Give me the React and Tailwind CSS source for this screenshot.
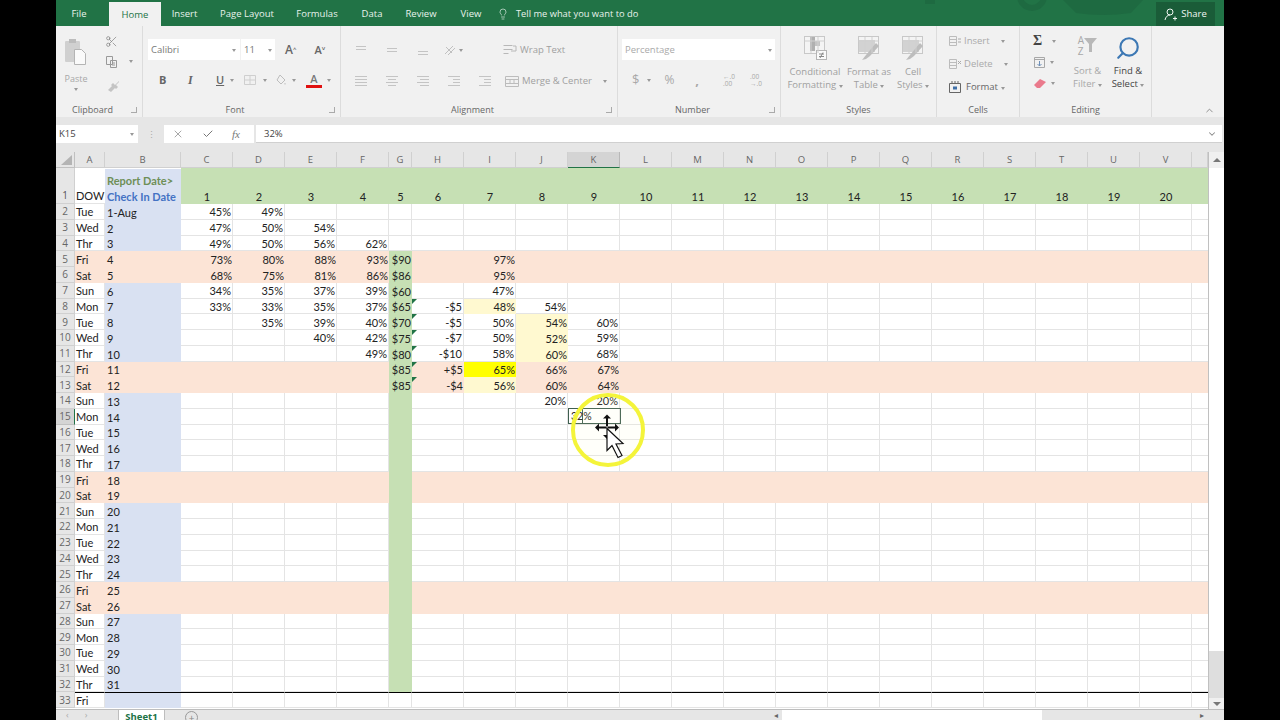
import React from "react";
import { Scissors, Lightbulb, Search, ChevronUp, ChevronDown, X, Check } from "lucide-react";

const ui = "font-['Open_Sans',sans-serif]";
const cols = ["A", "B", "C", "D", "E", "F", "G", "H", "I", "J", "K", "L", "M", "N", "O", "P", "Q", "R", "S", "T", "U", "V", ""];
const days = ["Tue", "Wed", "Thr", "Fri", "Sat", "Sun", "Mon"];

// values keyed by sheet row
const data = {
  2: { C: "45%", D: "49%" },
  3: { C: "47%", D: "50%", E: "54%" },
  4: { C: "49%", D: "50%", E: "56%", F: "62%" },
  5: { C: "73%", D: "80%", E: "88%", F: "93%", G: "$90", I: "97%" },
  6: { C: "68%", D: "75%", E: "81%", F: "86%", G: "$86", I: "95%" },
  7: { C: "34%", D: "35%", E: "37%", F: "39%", G: "$60", I: "47%" },
  8: { C: "33%", D: "33%", E: "35%", F: "37%", G: "$65", H: "-$5", I: "48%", J: "54%" },
  9: { D: "35%", E: "39%", F: "40%", G: "$70", H: "-$5", I: "50%", J: "54%", K: "60%" },
  10: { E: "40%", F: "42%", G: "$75", H: "-$7", I: "50%", J: "52%", K: "59%" },
  11: { F: "49%", G: "$80", H: "-$10", I: "58%", J: "60%", K: "68%" },
  12: { G: "$85", H: "+$5", I: "65%", J: "66%", K: "67%" },
  13: { G: "$85", H: "-$4", I: "56%", J: "60%", K: "64%" },
  14: { J: "20%", K: "20%" },
};
const paleCells = ["8I", "9J", "10J", "11J", "13I"];
const flagged = [8, 9, 10, 11, 12, 13];

const Tab = ({ w, children, active }) => (
  <div className={`flex h-full items-center justify-center pt-[2px] ${w} ${active ? "bg-[#f1f1f1] text-[#217346]" : "text-[#e8f2ec]"}`}>
    {children}
  </div>
);

const Group = ({ w, label, launcher, children }) => (
  <div className={`flex h-full flex-col border-r border-[#dcdcdc] ${w}`}>
    <div className="min-h-0 flex-1">{children}</div>
    <div className={`relative flex h-[14px] items-center justify-center text-[9px] text-[#666] ${launcher ? "pr-[13px]" : ""}`}>
      {label}
      {launcher && <span className="absolute right-[5px] top-[4px] h-[6px] w-[6px] border-b border-r border-[#aaa]" />}
    </div>
  </div>
);

const Caret = ({ className = "" }) => (
  <span className={`inline-block h-0 w-0 border-x-[2.5px] border-t-[3px] border-x-transparent border-t-[#999] ${className}`} />
);

const Lines = ({ rows, className = "" }) => (
  <svg width="14" height="12" viewBox="0 0 14 12" className={className} stroke="#c4c4c4" fill="none">
    {rows.map((r, i) => (
      <path key={i} d={`M${r[0]} ${r[2]}.5H${r[1]}`} />
    ))}
  </svg>
);

const PasteIcon = () => (
  <svg width="24" height="28" viewBox="0 0 24 28">
    <rect x="1" y="3" width="15" height="21" rx="1" fill="#d0d0d0" />
    <rect x="5" y="1" width="7" height="4" fill="#bcbcbc" />
    <path d="M10.5 11.5h7l4 4v11h-11z" fill="#fafafa" stroke="#b4b4b4" />
  </svg>
);

const GridIcon = ({ brush, cond }) => (
  <svg width="24" height="26" viewBox="0 0 24 26">
    <rect x="1.5" y="1.5" width="20" height="17" fill="#f4f4f4" stroke="#c8c8c8" />
    {cond ? (
      <>
        <rect x="7" y="2" width="5" height="14" fill="#b0b0b0" />
        <rect x="12" y="6" width="5" height="5" fill="#c4c4c4" />
        <rect x="13.5" y="15.5" width="10" height="9" fill="#fafafa" stroke="#b4b4b4" />
        <path d="M16 19h5M16 21.5h5M20 17.5l-3 5.5" stroke="#888" fill="none" />
      </>
    ) : (
      <rect x="2" y="5" width="16" height="12" fill="#d2d2d2" />
    )}
    {brush && <path d="M22 11l-9 10-4 3-4 1 4-5 10-12z" fill="#bdbdbd" />}
    <path d="M1.5 6h20M8 2v16M15 2v16" stroke="#d0d0d0" fill="none" />
  </svg>
);

const SmallCell = ({ d = "" }) => (
  <svg width="14" height="12" viewBox="0 0 14 12" fill="none" stroke="#bcbcbc">
    <path d="M1.5 1.5h7v9h-7zM1.5 4.5h7M1.5 7.5h7" />
    <path d={d} stroke="#aaa" />
  </svg>
);

const Ribbon = () => (
  <div className={`flex h-[91px] bg-[#f1f1f1] ${ui}`}>
    <Group w="w-[87px]" label="Clipboard" launcher>
      <div className="flex h-full">
        <div className="flex w-[40px] flex-col items-center pt-[12px] text-[9px] text-[#a8a8a8]">
          <PasteIcon />
          <span className="mt-[7px] leading-[12px]">Paste</span>
          <Caret className="mt-[3px]" />
        </div>
        <div className="flex flex-col gap-[7px] pl-[9px] pt-[9px]">
          <Scissors size={13} strokeWidth={1.2} className="text-[#777]" />
          <div className="flex items-center gap-[11px]">
            <svg width="13" height="13" viewBox="0 0 13 13" fill="none" stroke="#999">
              <path d="M1.5 1.5h6v8h-6zM5.5 5.5h6v7h-6zM7 8h3M7 10h3" />
            </svg>
            <Caret />
          </div>
          <svg width="13" height="13" viewBox="0 0 13 13" className="ml-[2px] mt-[5px]">
            <path d="M12 1L8 5 6 3 4 5l1 1-4 4 3 2 4-4 1 1 2-2-2-2 3-3z" fill="#c4c4c4" />
          </svg>
        </div>
      </div>
    </Group>

    <Group w="w-[198px]" label="Font" launcher>
      <div className="pl-[5px] pt-[13px]">
        <div className="flex h-[21px] items-center">
          <div className="flex h-full w-[92px] items-center justify-between bg-white px-[3px] pt-px text-[9.5px] text-[#777]">
            Calibri <Caret className="mr-[1px]" />
          </div>
          <div className="ml-px flex h-full w-[34px] items-center justify-between bg-white px-[3px] pt-px text-[9.5px] text-[#777]">
            11 <Caret />
          </div>
          <span className="ml-[10px] text-[12px] font-semibold leading-none text-[#666]">A<sup className="text-[6px]">^</sup></span>
          <span className="ml-[18px] text-[11px] font-semibold leading-none text-[#666]">A<sup className="text-[6px]">˅</sup></span>
        </div>
        <div className="mt-[10px] flex h-[20px] items-center pl-[11px] text-[#666]">
          <span className="w-[29px] text-[11px] font-bold">B</span>
          <span className="w-[28px] font-['Liberation_Serif',serif] text-[12px] font-bold italic">I</span>
          <span className="w-[14px] text-[11px] font-semibold underline">U</span>
          <Caret />
          <svg width="14" height="12" viewBox="0 0 14 12" className="ml-[9px]" fill="none" stroke="#cfcfcf">
            <path d="M1.5 1.5h11v9h-11zM7 1.5v9M1.5 6h11" />
          </svg>
          <Caret className="ml-[6px]" />
          <svg width="12" height="12" viewBox="0 0 12 12" className="ml-[8px]" fill="none" stroke="#bdbdbd">
            <path d="M5 1l5 5-4 4-4-4zM10 9v1.5" />
          </svg>
          <Caret className="ml-[5px]" />
          <div className="ml-[10px] flex w-[16px] flex-col items-center">
            <span className="text-[11px] font-semibold leading-[11px] text-[#777]">A</span>
            <span className="mt-px h-[3px] w-full bg-[#e01010]" />
          </div>
          <Caret className="ml-[5px]" />
        </div>
      </div>
    </Group>

    <Group w="w-[277px]" label="Alignment" launcher>
      <div className="pl-[13px] pt-[15px]">
        <div className="flex h-[18px] items-center text-[9.5px] text-[#a0a0a0]">
          <Lines rows={[[2, 12, 2], [2, 12, 5]]} />
          <Lines className="ml-[17px]" rows={[[2, 12, 4], [2, 12, 7]]} />
          <Lines className="ml-[17px]" rows={[[2, 12, 7], [2, 12, 10]]} />
          <svg width="14" height="12" viewBox="0 0 14 12" className="ml-[13px]" fill="none" stroke="#c0c0c0">
            <path d="M2 10L10 2M5 11l7-7M3 3l6 6" />
          </svg>
          <Caret className="ml-[2px]" />
          <svg width="16" height="14" viewBox="0 0 16 14" className="ml-[39px]" fill="none" stroke="#b8b8b8">
            <path d="M1.5 2.5h9M1.5 6.5h9M1.5 10.5h5M11 3h3v5H9" />
          </svg>
          <span className="ml-[2px]">Wrap Text</span>
        </div>
        <div className="mt-[13px] flex h-[18px] items-center text-[9.5px] text-[#a0a0a0]">
          <Lines rows={[[1, 13, 1], [1, 13, 4], [1, 13, 7], [1, 13, 10]]} />
          <Lines className="ml-[17px]" rows={[[1, 13, 1], [3, 11, 4], [1, 13, 7], [3, 11, 10]]} />
          <Lines className="ml-[17px]" rows={[[1, 13, 1], [4, 13, 4], [1, 13, 7], [4, 13, 10]]} />
          <Lines className="ml-[17px]" rows={[[1, 13, 1], [6, 13, 4], [6, 13, 7], [1, 13, 10]]} />
          <Lines className="ml-[17px]" rows={[[1, 13, 1], [6, 13, 4], [6, 13, 7], [1, 13, 10]]} />
          <svg width="16" height="13" viewBox="0 0 16 13" className="ml-[12px]" fill="none" stroke="#bcbcbc">
            <path d="M1.5 1.5h13v10h-13zM1.5 4.5h13M1.5 8.5h13M6 4.5v4M10 4.5v4" />
          </svg>
          <span className="ml-[2px]">Merge &amp; Center</span>
          <Caret className="ml-[11px]" />
        </div>
      </div>
    </Group>

    <Group w="w-[163px]" label="Number" launcher>
      <div className="pl-[4px] pt-[13px]">
        <div className="flex h-[21px] w-[153px] items-center justify-between bg-white px-[3px] pt-px text-[9.5px] text-[#aaa]">
          Percentage <Caret />
        </div>
        <div className="mt-[10px] flex h-[20px] items-center pl-[10px] text-[#a8a8a8]">
          <span className="text-[13px]">$</span>
          <Caret className="ml-[8px]" />
          <span className="ml-[13px] text-[12px]">%</span>
          <span className="ml-[21px] text-[13px] font-bold leading-[10px]">,</span>
          <span className="ml-[24px] text-[6.5px] leading-[7px]">←.0<br />.00</span>
          <span className="ml-[15px] text-[6.5px] leading-[7px]">.00<br />→.0</span>
        </div>
      </div>
    </Group>

    <Group w="w-[156px]" label="Styles">
      <div className="flex pt-[9px] text-[9.5px] leading-[13px] text-[#a0a0a0]">
        <div className="flex w-[68px] flex-col items-center">
          <GridIcon cond />
          <span className="mt-[4px] text-center">Conditional<br />Formatting <Caret /></span>
        </div>
        <div className="flex w-[40px] flex-col items-center">
          <GridIcon brush />
          <span className="mt-[4px] whitespace-nowrap text-center">Format as<br />Table <Caret /></span>
        </div>
        <div className="ml-[2px] flex w-[44px] flex-col items-center">
          <GridIcon brush />
          <span className="mt-[4px] text-center">Cell<br />Styles <Caret /></span>
        </div>
      </div>
    </Group>

    <Group w="w-[83px]" label="Cells">
      <div className="flex flex-col gap-[7px] pl-[11px] pt-[7px] text-[9.5px] leading-[16px] text-[#aaa]">
        <div className="flex items-center gap-[2px]"><SmallCell d="M10 4h3M10 7h3" />Insert<Caret className="ml-[9px]" /></div>
        <div className="flex items-center gap-[2px]"><SmallCell d="M10 3l3 3M13 3l-3 3" />Delete<Caret className="ml-[9px]" /></div>
        <div className="flex items-center gap-[4px] text-[#666]">
          <svg width="14" height="14" viewBox="0 0 14 14" fill="none" stroke="#666">
            <path d="M1.5 3.5h11v9h-11zM4 1v3M7 1v3M10 1v3" />
            <rect x="5" y="6.5" width="4" height="3" fill="#3e6fa8" stroke="none" />
          </svg>
          <span>Format <Caret className="ml-[1px]" /></span>
        </div>
      </div>
    </Group>

    <Group w="w-[132px]" label="Editing">
      <div className="flex pl-[13px] pt-[9px]">
        <div className="flex w-[34px] flex-col gap-[9px]">
          <div className="flex items-center gap-[10px]">
            <span className="font-['Liberation_Serif',serif] text-[14px] font-bold leading-[12px] text-[#444]">Σ</span>
            <Caret />
          </div>
          <div className="flex items-center gap-[4px]">
            <svg width="13" height="13" viewBox="0 0 13 13" fill="none" stroke="#a8a8a8">
              <path d="M1.5 1.5h10v10h-10zM1.5 3.5h10" />
              <path d="M6.5 5v5M4.5 8l2 2 2-2" stroke="#6d8fb8" />
            </svg>
            <Caret />
          </div>
          <div className="flex items-center gap-[4px]">
            <svg width="14" height="11" viewBox="0 0 14 11"><path d="M1 7l6-6 6 3-6 6H4z" fill="#ea7a8c" /></svg>
            <Caret className="border-t-[#555]" />
          </div>
        </div>
        <div className="flex w-[41px] flex-col items-center text-[9.5px] leading-[13px] text-[#a8a8a8]">
          <div className="flex h-[25px] items-start">
            <span className="text-[10px] leading-[11px]">A<br />Z</span>
            <svg width="13" height="14" viewBox="0 0 13 14" className="mt-[3px]"><path d="M0 0h13L8 6v8H5V6z" fill="#b8b8b8" /></svg>
          </div>
          <span className="mt-[4px] text-center">Sort &amp;<br />Filter <Caret /></span>
        </div>
        <div className="flex w-[40px] flex-col items-center text-[9.5px] leading-[13px] text-[#444]">
          <Search size={26} strokeWidth={2} className="-scale-x-100 text-[#3d78b4]" />
          <span className="mt-[3px] text-center">Find &amp;<br />Select <Caret className="border-t-[#444]" /></span>
        </div>
      </div>
    </Group>

    <div className="flex flex-1 items-end justify-end pb-[1px] pr-[9px]">
      <ChevronUp size={11} strokeWidth={2} className="text-[#888]" />
    </div>
  </div>
);

const FormulaBar = () => (
  <div className={`flex h-[35px] flex-col bg-[#e6e6e6] ${ui}`}>
    <div className="mt-[8px] flex h-[18px] items-stretch">
      <div className="flex w-[82px] items-center justify-between bg-white pl-[3px] pr-[4px] pt-px text-[9.5px] text-[#444]">
        K15 <Caret />
      </div>
      <div className="flex w-[26px] items-center justify-center text-[9px] leading-[3px] text-[#aaa]">⋮</div>
      <div className="flex w-[90px] items-center bg-white pl-[8px] text-[#777]">
        <X size={12} strokeWidth={1.3} />
        <Check size={12} strokeWidth={2} className="ml-[18px]" />
        <span className="ml-[18px] font-['Liberation_Serif',serif] text-[11px] italic">fx</span>
      </div>
      <div className="ml-[2px] flex flex-1 items-center justify-between border-b border-[#d0d0d0] bg-white pl-[8px] pr-[5px] pt-px text-[9.5px] text-[#444]">
        32% <ChevronDown size={10} strokeWidth={2.5} className="text-[#888]" />
      </div>
      <div className="w-[2px]" />
    </div>
  </div>
);

const Sheet = () => {
  const rows = Array.from({ length: 32 }, (_, i) => i + 2);
  return (
    <div className="relative grid grid-cols-[19px_30px_76px_repeat(4,52px)_23px_repeat(15,52px)_16px] grid-rows-[16px_36px_repeat(32,15.75px)] font-['Lato','Liberation_Sans',sans-serif] text-[11px] text-[#222]">
      <div className="border-b border-r border-[#c0c0c0] bg-[#e6e6e6]">
        <svg width="18" height="15" viewBox="0 0 18 15"><path d="M16 3v10H5z" fill="#b4b4b4" /></svg>
      </div>
      {cols.map((c) => (
        <div
          key={c || "end"}
          className={`flex items-center justify-center border-b border-r pt-[2px] text-[9.5px] text-[#666] ${ui} ${c === "K" ? "border-b-[#217346] border-r-[#b8b8b8] bg-[#d4d4d4]" : "border-[#d0d0d0] bg-[#e6e6e6]"}`}
        >
          {c}
        </div>
      ))}

      <div className={`flex items-end justify-center border-b border-r border-[#d0d0d0] bg-[#e6e6e6] text-[10px] text-[#555] ${ui}`}>1</div>
      <div className="flex items-end border-b border-[#e4e4e4] bg-white pb-[1px] pl-[1px] leading-[12px]">DOW</div>
      <div className="flex translate-y-px flex-col justify-end bg-[#d9e1f2] pl-[2px] font-bold leading-[16px]">
        <span className="text-[#6e8f57]">Report Date&gt;</span>
        <span className="text-[#4472c4]">Check In Date</span>
      </div>
      {cols.slice(2).map((c, i) => (
        <div key={c || "end1"} className="flex items-end justify-center bg-[#c6e0b4] pb-[1px] leading-[12px]">
          {c && i + 1}
        </div>
      ))}

      {rows.map((r) => {
        const dayIdx = (r - 2) % 7;
        const peach = r !== 33 && (dayIdx === 3 || dayIdx === 4);
        const label = r === 2 ? "1-Aug" : r === 33 ? "" : String(r - 1);
        return (
          <React.Fragment key={r}>
            <div className={`flex items-center justify-center border-b border-r pt-px text-[10px] text-[#666] ${ui} ${r === 15 ? "border-r-[#217346] border-b-[#c0c0c0] bg-[#d4d4d4]" : "border-[#d0d0d0] bg-[#e6e6e6]"}`}>
              {r}
            </div>
            {cols.map((c) => {
              const val = data[r]?.[c];
              const green = c === "G" && r >= 5 && r <= 32;
              const pale = paleCells.includes(`${r}${c}`);
              let bg = "bg-white border-b border-r border-[#e4e4e4]";
              if (peach) bg = "bg-[#fce4d6]";
              if (c === "B" && !peach) bg = "bg-[#d9e1f2]";
              if (green) bg = "bg-[#c6e0b4]";
              if (pale) bg = "bg-[#fff9d0]";
              if (`${r}${c}` === "12I") bg = "bg-[#ffff00]";
              if (c === "") bg = peach ? "bg-[#fce4d6]" : "bg-white border-b border-[#e4e4e4]";
              const line = r === 33 ? "border-t border-t-black" : "";
              const leftText = c === "A" || c === "B";
              return (
                <div
                  key={c || "end"}
                  className={`relative flex items-center whitespace-nowrap pt-px leading-none ${bg} ${line} ${leftText ? (c === "A" ? "pl-[1px]" : "pl-[2px]") : "justify-end pr-[1px]"}`}
                >
                  {c === "A" && days[dayIdx]}
                  {c === "B" && label}
                  {val}
                  {c === "G" && flagged.includes(r) && (
                    <span className="absolute left-full top-0 z-10 h-0 w-0 border-r-[5px] border-t-[5px] border-r-transparent border-t-[#217346]" />
                  )}
                </div>
              );
            })}
          </React.Fragment>
        );
      })}

      {/* drag outline over K15 */}
      <div className="absolute left-[512px] top-[256px] z-10 h-[16px] w-[53px] border border-[#3f5f50] text-[10.5px] leading-[15px]">
        <span className="absolute inset-y-0 left-[13px] w-px bg-[#3f5f50]" />
        <span className="absolute left-[2px] top-0">32%</span>
      </div>
      {/* pointer highlight and cursor */}
      <svg width="90" height="90" viewBox="0 0 90 90" className="absolute left-[507px] top-[232.5px] z-20 overflow-visible">
        <circle cx="45" cy="45" r="35" fill="#ffffc0" fillOpacity="0.08" stroke="#f4f43a" strokeWidth="4" />
        <path d="M44 29.5l-4 4h3v9h2v-9h3zM32 42.5l4-4v3h16v-3l4 4-4 4v-3H36v3zM40 50h7l-3 4z" fill="#111" />
        <path d="M44 43.5v22l5-5 6 12 4-2-6-11.500 7-.5z" fill="#fff" stroke="#111" strokeWidth="1.2" />
      </svg>
    </div>
  );
};

const Scrollbar = () => (
  <div className="flex w-[16px] flex-col border-l border-[#c0c0c0] bg-[#dedede]">
    <div className="flex h-[16px] items-center justify-center bg-[#f0f0f0]">
      <span className="h-0 w-0 border-x-[4px] border-b-[4px] border-x-transparent border-b-[#777]" />
    </div>
    <div className="h-[483px] bg-white" />
    <div className="flex-1" />
    <div className="flex h-[11px] items-center justify-center bg-[#f0f0f0]">
      <span className="h-0 w-0 border-x-[4px] border-t-[4px] border-x-transparent border-t-[#777]" />
    </div>
  </div>
);

const SheetTabs = () => (
  <div className={`flex h-[11px] items-start overflow-hidden border-t border-[#bdbdbd] bg-[#e6e6e6] ${ui}`}>
    <div className="flex w-[62px] items-center gap-[16px] pl-[10px] text-[9px] leading-[10px] text-[#aaa]">
      <span>‹</span><span>›</span>
    </div>
    <div className="h-[16px] w-[47px] border-x border-[#bdbdbd] bg-white text-center text-[9.5px] font-bold leading-[14px] text-[#217346]">Sheet1</div>
    <div className="ml-[20px] mt-[1px] flex h-[13px] w-[13px] items-center justify-center rounded-full border border-[#999] text-[10px] leading-none text-[#888]">+</div>
    <div className="ml-auto flex h-full w-[438px] items-center">
      <span className="w-[12px] text-center text-[8px] leading-[8px] text-[#666]">◂</span>
      <div className="h-full w-[260px] bg-white" />
      <span className="ml-auto w-[12px] text-center text-[8px] leading-[8px] text-[#666]">▸</span>
    </div>
    <div className="w-[16px]" />
  </div>
);

export default function App() {
  return (
    <div className="flex h-[720px] w-[1280px] justify-center overflow-hidden bg-black">
      <div className="flex w-[1168px] flex-col bg-white">
        <div className={`relative flex h-[26px] items-end bg-[#217346] text-[9.5px] ${ui}`}>
          {/* faded backdrop art in the title bar */}
          <svg width="250" height="26" viewBox="0 0 250 26" className="absolute left-[850px] top-0">
            <rect x="19" y="0" width="10" height="4" fill="#1e6a41" />
            <circle cx="126" cy="-4" r="12" fill="none" stroke="#1e6a41" strokeWidth="6" />
            <path d="M157 0l13 13q27 4 55 0l12-13z" fill="#1e6a41" />
          </svg>
          <Tab w="w-[46px]">File</Tab>
          <div className="ml-[7px] h-[24px]"><Tab w="w-[52px]" active>Home</Tab></div>
          <div className="flex h-[26px]">
            <Tab w="w-[47px]">Insert</Tab>
            <Tab w="w-[78px]">Page Layout</Tab>
            <Tab w="w-[62px]">Formulas</Tab>
            <Tab w="w-[48px]">Data</Tab>
            <Tab w="w-[50px]">Review</Tab>
            <Tab w="w-[50px]">View</Tab>
          </div>
          <div className="ml-px flex h-[26px] items-center gap-[7px] pt-[2px] text-[9.3px] text-[#e8f2ec]">
            <Lightbulb size={12} strokeWidth={1.3} />
            Tell me what you want to do
          </div>
          <div className="absolute left-[1100px] top-[2px] flex h-[24px] w-[59px] items-center justify-center gap-[4px] bg-[#1a5c38] text-[#f0f6f2]">
            <svg width="13" height="13" viewBox="0 0 13 13" fill="none" stroke="#f0f6f2">
              <circle cx="6" cy="4" r="3" />
              <path d="M1 12c.5-3 2.5-5 5-5M9 10.5h4M11 8.5v4" />
            </svg>
            Share
          </div>
        </div>
        <Ribbon />
        <FormulaBar />
        <div className="flex h-[557px]">
          <div className="w-[1152px] overflow-hidden"><Sheet /></div>
          <Scrollbar />
        </div>
        <SheetTabs />
      </div>
    </div>
  );
}
